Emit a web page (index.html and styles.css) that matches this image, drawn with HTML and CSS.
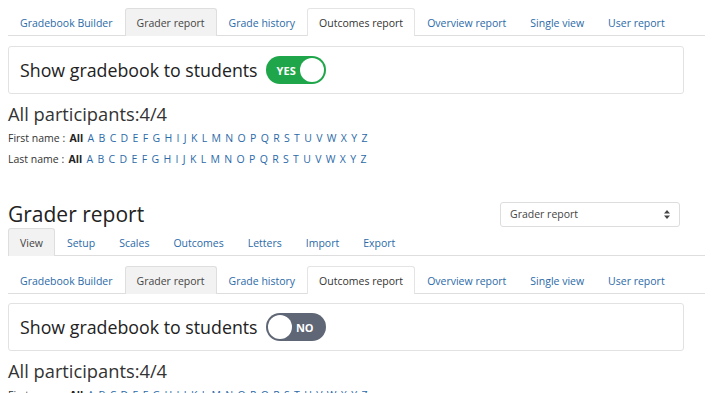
FILE: index.html
```html
<!DOCTYPE html>
<html>
<head>
<meta charset="utf-8">
<link rel="stylesheet" href="styles.css">
</head>
<body>
<div class="page">
  <ul class="tabs">
    <li class="tab"><a>Gradebook Builder</a></li>
    <li class="tab active"><a>Grader report</a></li>
    <li class="tab"><a>Grade history</a></li>
    <li class="tab open"><a>Outcomes report</a></li>
    <li class="tab"><a>Overview report</a></li>
    <li class="tab"><a>Single view</a></li>
    <li class="tab"><a>User report</a></li>
  </ul>
  <div class="card">
    <span class="card-label">Show gradebook to students</span>
    <span class="toggle on"><span class="toggle-text">YES</span><span class="knob"></span></span>
  </div>
  <div class="participants">All participants:4/4</div>
  <div class="initials first"><span class="lbl">First name :</span> <b>All</b> <a>A</a> <a>B</a> <a>C</a> <a>D</a> <a>E</a> <a>F</a> <a>G</a> <a>H</a> <a>I</a> <a>J</a> <a>K</a> <a>L</a> <a>M</a> <a>N</a> <a>O</a> <a>P</a> <a>Q</a> <a>R</a> <a>S</a> <a>T</a> <a>U</a> <a>V</a> <a>W</a> <a>X</a> <a>Y</a> <a>Z</a></div>
  <div class="initials"><span class="lbl">Last name :</span> <b>All</b> <a>A</a> <a>B</a> <a>C</a> <a>D</a> <a>E</a> <a>F</a> <a>G</a> <a>H</a> <a>I</a> <a>J</a> <a>K</a> <a>L</a> <a>M</a> <a>N</a> <a>O</a> <a>P</a> <a>Q</a> <a>R</a> <a>S</a> <a>T</a> <a>U</a> <a>V</a> <a>W</a> <a>X</a> <a>Y</a> <a>Z</a></div>

  <div class="header-row">
    <h2 class="title">Grader report</h2>
    <div class="select"><span>Grader report</span><span class="arrows"><svg width="6" height="9" viewBox="0 0 6 9"><path d="M3 0L6 3.5H0Z M3 9L0 5.5H6Z" fill="#444"/></svg></span></div>
  </div>
  <ul class="tabs tabs2">
    <li class="tab active"><a>View</a></li>
    <li class="tab"><a>Setup</a></li>
    <li class="tab"><a>Scales</a></li>
    <li class="tab"><a>Outcomes</a></li>
    <li class="tab"><a>Letters</a></li>
    <li class="tab"><a>Import</a></li>
    <li class="tab"><a>Export</a></li>
  </ul>
  <ul class="tabs tabs3">
    <li class="tab"><a>Gradebook Builder</a></li>
    <li class="tab active"><a>Grader report</a></li>
    <li class="tab"><a>Grade history</a></li>
    <li class="tab open"><a>Outcomes report</a></li>
    <li class="tab"><a>Overview report</a></li>
    <li class="tab"><a>Single view</a></li>
    <li class="tab"><a>User report</a></li>
  </ul>
  <div class="card card2">
    <span class="card-label">Show gradebook to students</span>
    <span class="toggle off"><span class="knob"></span><span class="toggle-text">NO</span></span>
  </div>
  <div class="participants">All participants:4/4</div>
  <div class="initials first"><span class="lbl">First name :</span> <b>All</b> <a>A</a> <a>B</a> <a>C</a> <a>D</a> <a>E</a> <a>F</a> <a>G</a> <a>H</a> <a>I</a> <a>J</a> <a>K</a> <a>L</a> <a>M</a> <a>N</a> <a>O</a> <a>P</a> <a>Q</a> <a>R</a> <a>S</a> <a>T</a> <a>U</a> <a>V</a> <a>W</a> <a>X</a> <a>Y</a> <a>Z</a></div>
</div>
</body>
</html>
```
FILE: styles.css
```css
html, body {
  margin: 0;
  padding: 0;
  background: #fff;
  overflow: hidden;
}
body {
  font-family: "Open Sans", "Liberation Sans", sans-serif;
  color: #333;
}
.page {
  padding: 8px 15px 0 8px;
}
.tabs {
  list-style: none;
  margin: 0;
  padding: 0;
  display: flex;
  border-bottom: 1px solid #dedede;
  height: 27px;
  width: 697px;
}
.tab {
  display: flex;
  align-items: center;
  padding: 0 11px;
  font-size: 10.5px;
  white-space: nowrap;
  color: #2b6aa8;
  border: 1px solid transparent;
  border-bottom: none;
  border-radius: 3px 3px 0 0;
  margin-bottom: -1px;
}
.tab.active {
  background: #f2f2f2;
  border-color: #dedede;
  color: #444;
}
.tab.open {
  background: #fff;
  border-color: #e4e4e4;
  color: #333;
}
.card {
  margin-top: 10px;
  width: 676px;
  height: 48px;
  box-sizing: border-box;
  border: 1px solid #e2e2e2;
  border-radius: 3px;
  display: flex;
  align-items: center;
  padding-left: 11px;
}
.card2 { margin-top: 9px; }
.card-label {
  font-size: 17.8px;
  color: #222;
  margin-right: 8px;
}
.toggle {
  width: 60px;
  height: 28px;
  border-radius: 14px;
  box-sizing: border-box;
  display: flex;
  align-items: center;
  justify-content: space-between;
  padding: 0 2px 0 11px;
}
.toggle.on { background: #1fa64a; }
.toggle.off { background: #5f6675; padding: 0 12px 0 2px; }
.toggle-text {
  color: #fff;
  font-weight: 700;
  font-size: 11px;
}
.knob {
  width: 24px;
  height: 24px;
  border-radius: 50%;
  background: #fff;
}
.participants {
  font-size: 18.3px;
  color: #333;
  margin-top: 8px;
  line-height: 24px;
}
.initials {
  font-size: 10.5px;
  line-height: 21px;
  color: #333;
  word-spacing: 1.6px;
  white-space: nowrap;
}
.initials .lbl { word-spacing: 0; }
.initials b { font-weight: 700; color: #222; }
.initials a { color: #2b6aa8; }
.initials.first { margin-top: 2px; }
.header-row {
  display: flex;
  align-items: center;
  justify-content: space-between;
  margin-top: 30px;
  width: 672px;
}
.title {
  font-size: 21px;
  font-weight: 400;
  margin: 0;
  color: #222;
  line-height: 28px;
}
.select {
  width: 180px;
  height: 25px;
  box-sizing: border-box;
  border: 1px solid #ddd;
  border-radius: 3px;
  display: flex;
  align-items: center;
  justify-content: space-between;
  padding: 0 9px 0 9px;
  font-size: 10.5px;
  color: #444;
}
.arrows { display: flex; }
.tabs2 { margin-top: 0; }
.tabs3 { margin-top: 10px; }
```
